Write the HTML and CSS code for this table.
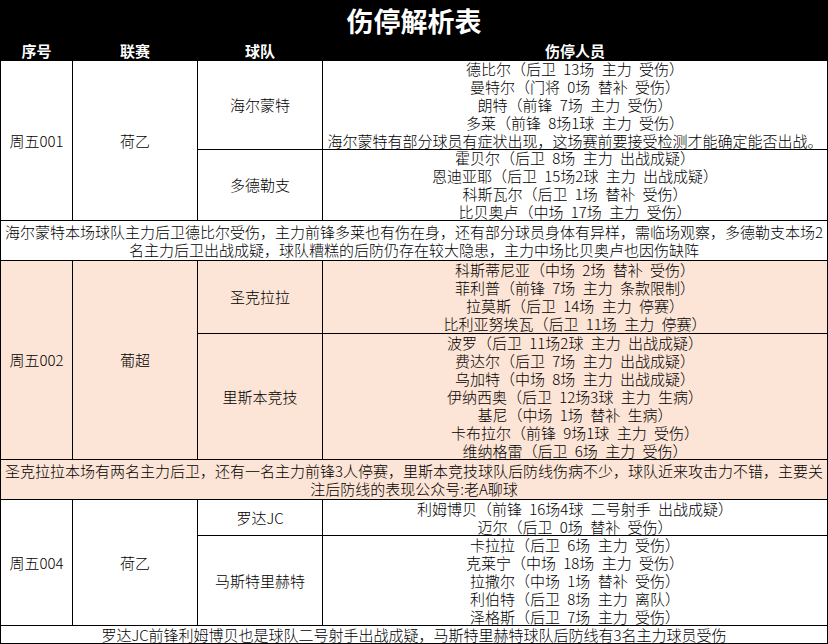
FILE: index.html
```html
<!DOCTYPE html>
<html lang="zh-CN">
<head>
<meta charset="utf-8">
<title>伤停解析表</title>
<link rel="stylesheet" href="styles.css">
</head>
<body>
<div class="sheet">
  <div class="title">伤停解析表</div>
  <div class="th">序号</div>
  <div class="th">联赛</div>
  <div class="th">球队</div>
  <div class="th">伤停人员</div>

  <div class="cell span2">周五001</div>
  <div class="cell span2">荷乙</div>
  <div class="cell">海尔蒙特</div>
  <div class="cell">
    <div>德比尔（后卫 13场 主力 受伤）</div>
    <div>曼特尔（门将 0场 替补 受伤）</div>
    <div>朗特（前锋 7场 主力 受伤）</div>
    <div>多莱（前锋 8场1球 主力 受伤）</div>
    <div>海尔蒙特有部分球员有症状出现，这场赛前要接受检测才能确定能否出战。</div>
  </div>
  <div class="cell">多德勒支</div>
  <div class="cell">
    <div>霍贝尔（后卫 8场 主力 出战成疑）</div>
    <div>恩迪亚耶（后卫 15场2球 主力 出战成疑）</div>
    <div>科斯瓦尔（后卫 1场 替补 受伤）</div>
    <div>比贝奥卢（中场 17场 主力 受伤）</div>
  </div>
  <div class="cell note">
    <div>海尔蒙特本场球队主力后卫德比尔受伤，主力前锋多莱也有伤在身，还有部分球员身体有异样，需临场观察，多德勒支本场2</div>
    <div>名主力后卫出战成疑，球队糟糕的后防仍存在较大隐患，主力中场比贝奥卢也因伤缺阵</div>
  </div>

  <div class="cell peach span2">周五002</div>
  <div class="cell peach span2">葡超</div>
  <div class="cell peach">圣克拉拉</div>
  <div class="cell peach">
    <div>科斯蒂尼亚（中场 2场 替补 受伤）</div>
    <div>菲利普（前锋 7场 主力 条款限制）</div>
    <div>拉莫斯（后卫 14场 主力 停赛）</div>
    <div>比利亚努埃瓦（后卫 11场 主力 停赛）</div>
  </div>
  <div class="cell peach">里斯本竞技</div>
  <div class="cell peach">
    <div>波罗（后卫 11场2球 主力 出战成疑）</div>
    <div>费达尔（后卫 7场 主力 出战成疑）</div>
    <div>乌加特（中场 8场 主力 出战成疑）</div>
    <div>伊纳西奥（后卫 12场3球 主力 生病）</div>
    <div>基尼（中场 1场 替补 生病）</div>
    <div>卡布拉尔（前锋 9场1球 主力 受伤）</div>
    <div>维纳格雷（后卫 6场 主力 受伤）</div>
  </div>
  <div class="cell peach note">
    <div>圣克拉拉本场有两名主力后卫，还有一名主力前锋3人停赛，里斯本竞技球队后防线伤病不少，球队近来攻击力不错，主要关</div>
    <div>注后防线的表现公众号:老A聊球</div>
  </div>

  <div class="cell span2">周五004</div>
  <div class="cell span2">荷乙</div>
  <div class="cell">罗达JC</div>
  <div class="cell">
    <div>利姆博贝（前锋 16场4球 二号射手 出战成疑）</div>
    <div>迈尔（后卫 0场 替补 受伤）</div>
  </div>
  <div class="cell">马斯特里赫特</div>
  <div class="cell">
    <div>卡拉拉（后卫 6场 主力 受伤）</div>
    <div>克莱宁（中场 18场 主力 受伤）</div>
    <div>拉撒尔（中场 1场 替补 受伤）</div>
    <div>利伯特（后卫 8场 主力 离队）</div>
    <div>泽格斯（后卫 7场 主力 受伤）</div>
  </div>
  <div class="cell note">
    <div>罗达JC前锋利姆博贝也是球队二号射手出战成疑，马斯特里赫特球队后防线有3名主力球员受伤</div>
  </div>
</div>
</body>
</html>
```

FILE: styles.css
```css
html, body {
  margin: 0;
  padding: 0;
  background: #ffffff;
}

body {
  font-family: "Noto Sans CJK SC", "Noto Sans", sans-serif;
  font-size: 15px;
  color: #000000;
}

.sheet {
  display: grid;
  width: 828px;
  box-sizing: border-box;
  padding: 1px;
  gap: 1px;
  background: #000000;
  grid-template-columns: 71px 124px 124px 504px;
  grid-template-rows: 39px 19px 88px 70px 39px 72px 125px 39px 35px 89px 17px;
}

.title {
  grid-column: 1 / -1;
  background: #000000;
  color: #ffffff;
  font-weight: 700;
  font-size: 27px;
  line-height: 30px;
  display: flex;
  align-items: center;
  justify-content: center;
}

.th {
  background: #000000;
  color: #ffffff;
  font-weight: 700;
  font-size: 15px;
  line-height: 18px;
  display: flex;
  align-items: center;
  justify-content: center;
}

.cell {
  background: #ffffff;
  display: flex;
  flex-direction: column;
  align-items: center;
  justify-content: center;
  text-align: center;
  font-weight: 300;
  line-height: 18px;
  white-space: nowrap;
  word-spacing: 4px;
}

.span2 {
  grid-row: span 2;
}

.note {
  grid-column: 1 / -1;
}

.peach {
  background: #fce4d6;
}
```
